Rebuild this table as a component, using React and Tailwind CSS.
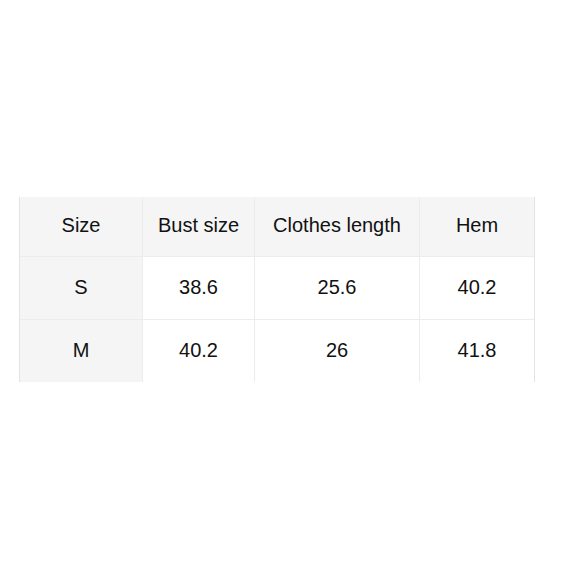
import React from 'react'

const cols = ['Size', 'Bust size', 'Clothes length', 'Hem']
const rows = [
  ['S', '38.6', '25.6', '40.2'],
  ['M', '40.2', '26', '41.8'],
]

export default function App(){
  return (
    <div className="w-[580px] h-[580px] bg-white pt-[197px] pl-[19px]" style={{fontFamily:'"Liberation Sans", Arial, sans-serif'}}>
      <div className="w-[516px] border-l border-r border-[#e4e4e4]">
        <div className="grid grid-cols-[122px_112px_165px_115px] text-[20px] text-[#111111]">
          {cols.map((c, i) => (
            <Cell key={c} first={i===0} gray top>{c}</Cell>
          ))}
          {rows.map((r, ri) => r.map((v, i) => (
            <Cell key={ri+'-'+i} first={i===0} gray={i===0}>{v}</Cell>
          )))}
        </div>
      </div>
    </div>
  )
}

function Cell({children, first, gray, top}){
  return (
    <div className={`flex items-center justify-center ${top? 'h-[59px] pb-[4px]':'h-[63px] pb-[3px]'} ${gray? 'bg-[#f5f5f5]':'bg-white'} ${first? '':'border-l border-[#ececec]'} ${top? '':'border-t border-[#ececec]'}`}>
      {children}
    </div>
  )
}
